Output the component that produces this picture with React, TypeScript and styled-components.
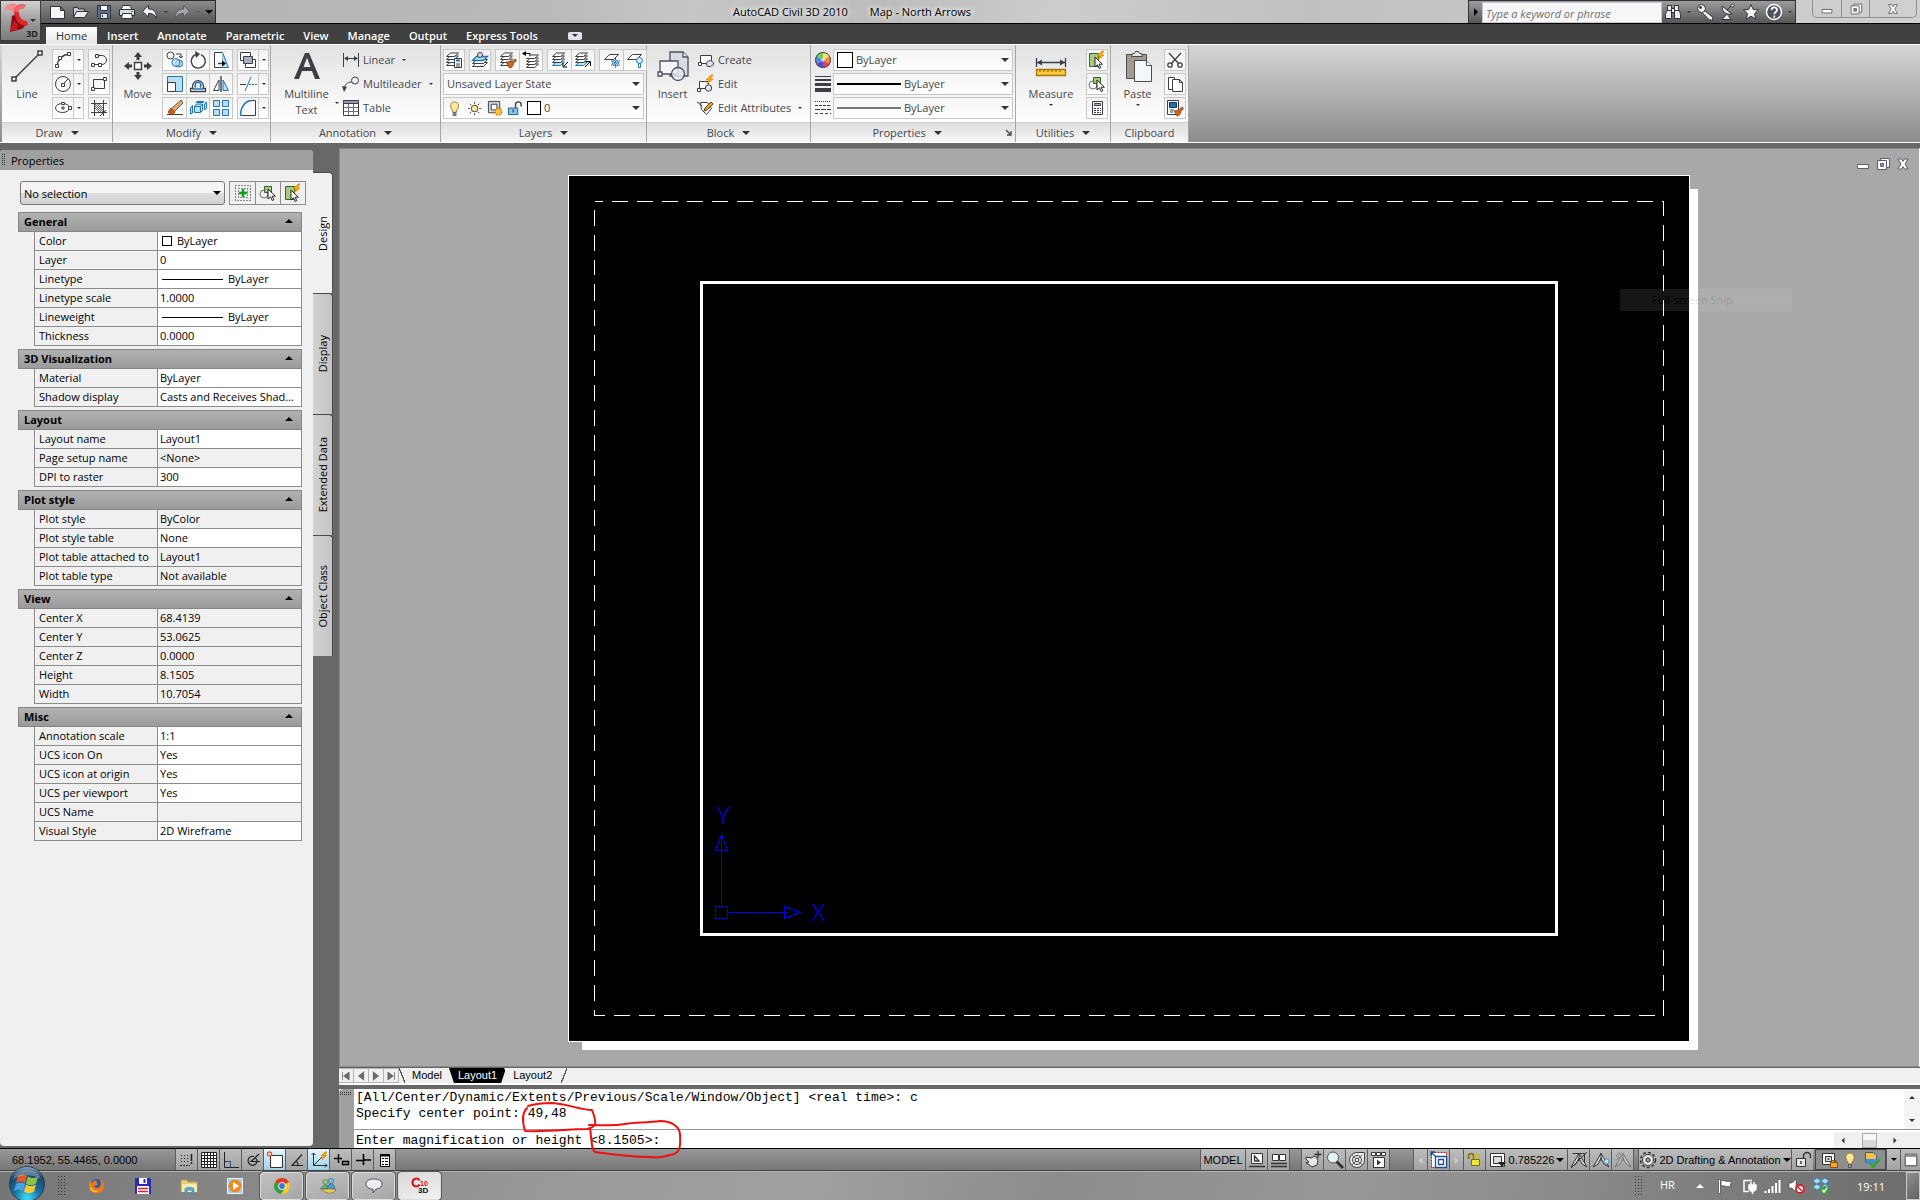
import React from "react";
import styled, { createGlobalStyle, css } from "styled-components";

const ui = `"Open Sans", "Noto Sans", sans-serif`;
const sys = `"Liberation Sans", Arial, sans-serif`;
const ink = "#3b3f45";
const blue = "#1f74b8";
const pale = "#b9dff0";

const Global = createGlobalStyle`
  * { box-sizing: border-box; }
  html, body { margin: 0; height: 100%; }
  body { background: #686868; font-family: ${ui}; font-size: 11px; color: #000; overflow: hidden; }
  button, select, input { font: inherit; color: inherit; margin: 0; padding: 0; border: 0; background: none; border-radius: 0; }
  svg { display: block; flex: none; }
  #root { height: 100%; }
`;

/* ---------- icons ---------- */

const Stack = ({ accent }: { accent?: boolean }) => (
  <g fill="#fff" stroke={ink}>
    <path d="M1.500 14.500l4-3.500h8l-4 3.500z" fill={accent ? pale : "#fff"} stroke={accent ? blue : ink} />
    <path d="M1.500 11.500l4-3.500h8l-4 3.500z" />
    <path d="M1.500 8.500l4-3.500h8l-4 3.500z" />
    <path d="M1.500 5.500l4-3.500h8l-4 3.500z" />
  </g>
);

const Cursor = () => <path d="M9 5v10l2.500-2.200 1.700 3.700 1.600-.8-1.700-3.500h3.300z" fill="#fff" stroke="#222" />;
const Bolt = () => <path d="M14 0l-5 5h3l-2 4 6-5h-3l3-4z" fill="#ffb400" stroke="#e07800" strokeWidth=".7" />;
const Viewer = () => (
  <g fill="none" stroke="#333">
    <path d="M9 2l-2 4-6 10 5-3 3-6 3 6 5 3-6-10zM9 2v8" fill="#ddd" />
  </g>
);

const icons: Record<string, React.ReactNode> = {
  new: <path d="M1.500 3.500h10l4 4v8h-14zM11.500 3.500v4h4" fill="#f4f6f8" stroke="#2d3138" />,
  open: (
    <g stroke="#2d3138" fill="#c9cfd6">
      <path d="M1.500 14.500v-10h4l1 1.500h6v3" />
      <path d="M1.500 14.500l3-6h12l-4 6z" fill="#eef1f4" />
    </g>
  ),
  save: (
    <g stroke="#2d3544">
      <path d="M2.500 2.500h13v13h-12l-1-1z" fill="#63708a" />
      <path d="M5.500 2.500h7v5h-7z" fill="#fff" />
      <path d="M5.500 10.500h7v5h-7z" fill="#dde2ea" />
      <path d="M7.500 12v2" />
    </g>
  ),
  print: (
    <g stroke="#2d3138" fill="#fff">
      <path d="M4.500 2.500h8l1 4h-10z" />
      <path d="M1.500 6.500h15v6h-15z" fill="#d8dbe0" />
      <path d="M4.500 10.500h9l1 5h-11z" />
      <path d="M13 8.500h2" stroke="#3c9a3c" />
    </g>
  ),
  undo: <path d="M7.500 2.500v3.500c5 0 8 2 8 9-2-3.500-4-4.500-8-4.500V14l-6-5.700z" fill="#f1f3f6" stroke="#2d3138" />,
  redo: <path d="M10.500 2.500v3.500c-5 0-8 2-8 9 2-3.500 4-4.500 8-4.500V14l6-5.700z" fill="#a2a6ac" stroke="#54575c" />,
  binoculars: (
    <g fill="#eceef2" stroke="#2f333a">
      <path d="M3.500 2.500h4v5h-4zM10.500 2.500h4v5h-4z" />
      <path d="M2.500 7.500h5l0 8h-6v-4zM15.500 7.500h-5v8h6v-4zM7.500 5.500h3v4h-3z" />
    </g>
  ),
  key: (
    <g fill="#eceef2" stroke="#2f333a">
      <path d="M8 7l9 7.500-.5 2.500h-3L6 9.500z" />
      <circle cx="5.500" cy="5.500" r="4" />
      <circle cx="4.500" cy="4.500" r="1" fill="#2f333a" />
    </g>
  ),
  dish: (
    <g fill="#eceef2" stroke="#2f333a">
      <path d="M3 3c0 6 4 9 10 8z" />
      <path d="M7 12l-4 4.500h9l-3-4M8 7l5-5" />
      <circle cx="13.500" cy="2.500" r="1.500" />
    </g>
  ),
  star: <path d="M9 1.500l2.200 5 5.300.5-4 3.600 1.200 5.400L9 13.200 4.300 16l1.200-5.400-4-3.600 5.300-.5z" fill="#f4f5f7" stroke="#2f333a" />,
  help: (
    <g>
      <circle cx="9" cy="9" r="7.500" fill="#4b5260" stroke="#fff" strokeWidth="1.500" />
      <path d="M6.500 7c0-3.500 5.500-3.500 5.500 0 0 2-2.700 2-2.700 4.200M9.300 12.500v2" stroke="#fff" strokeWidth="1.800" fill="none" />
    </g>
  ),
  line: (
    <g stroke={ink} strokeWidth="1.500">
      <path d="M3 29L29 3" />
      <path d="M1 27h4v4h-4zM27 1h4v4h-4z" fill="#fff" />
    </g>
  ),
  move: (
    <g fill={ink}>
      <path d="M12.500 12.500h7v7h-7z" fill="#fff" stroke={ink} strokeWidth="1.400" />
      <path d="M16 2l4 5h-2.500v3h-3v-3H12zM16 30l4-5h-2.500v-3h-3v3H12zM2 16l5-4v2.500h3v3H7V20zM30 16l-5-4v2.500h-3v3h3V20z" />
    </g>
  ),
  bigA: <path d="M3 29L14 3h4l11 26h-5l-3-8H11l-3 8zM12.500 17h7L16 7.500z" fill={ink} fillRule="evenodd" />,
  insert: (
    <g fill="#f3f5f8" stroke="#4a5060" strokeWidth="1.300">
      <path d="M13 2h13l5 5v19H13z" fill="#d8dde4" />
      <path d="M26 2v5h5" />
      <path d="M3 11h18v13H3z" />
      <path d="M1 22h4v4H1z" />
      <circle cx="21" cy="24" r="6.500" fill="#e9edf2" fillOpacity=".8" />
    </g>
  ),
  measure: (
    <g stroke={ink} strokeWidth="1.300">
      <path d="M1.500 8v9M30.500 8v9M2 12.500h28" />
      <path d="M2 12.500l5-3v6zM30 12.500l-5-3v6z" fill={ink} stroke="none" />
      <path d="M1.500 19.500h29v6h-29z" fill="#f9c93a" stroke="#a87410" />
      <path d="M5 20v2M9 20v2M13 20v2M17 20v2M21 20v2M25 20v2" stroke="#a87410" />
    </g>
  ),
  paste: (
    <g stroke="#4e4a48">
      <path d="M4.500 4.500h20v24h-20z" fill="#a39a92" />
      <path d="M9.500 6.500l1-3h2l1-2h3l1 2h2l1 3z" fill="#e6e6e6" />
      <path d="M12.500 10.500h12l5 5v16h-17z" fill="#f3f6fb" />
      <path d="M24.500 10.500v5h5" fill="#fff" />
    </g>
  ),
  arc: (
    <g stroke={ink} fill="#fff">
      <path d="M3 15c1-7 5-11 12-12" fill="none" strokeWidth="1.300" />
      <path d="M1.500 13.500h3v3h-3zM4.500 5.500h3v3h-3zM13.500 1.500h3v3h-3z" />
    </g>
  ),
  circle: (
    <g stroke={ink} fill="none">
      <circle cx="9" cy="9" r="7.500" />
      <path d="M9 9l5-5" />
      <path d="M7.500 8.500h3v3h-3z" fill="#fff" />
    </g>
  ),
  ellipse: (
    <g stroke={ink} fill="#fff">
      <ellipse cx="8.500" cy="9" rx="7" ry="4.500" />
      <path d="M14.500 7.500h3v3h-3zM7.500 3.500h3v2h-3z" />
      <path d="M7 9h4M9 7v4" />
    </g>
  ),
  pline: (
    <g stroke={ink} fill="none">
      <path d="M7 4.500h5a4.500 4.500 0 010 9H4" />
      <path d="M5.500 3.500h3v3h-3zM1.500 12.500h3v3h-3zM8.500 12.500h3v3h-3z" fill="#fff" />
    </g>
  ),
  rect: (
    <g stroke={ink} fill="none">
      <path d="M3.500 4.500h11v9h-11z" />
      <path d="M13.500 2.500h3v3h-3zM1.500 12.500h3v3h-3z" fill="#fff" />
    </g>
  ),
  hatch: (
    <g stroke={ink} fill="none">
      <path d="M4.500 1v16M13.500 1v16M1 4.500h16M1 13.500h16" />
      <path d="M5 5l8 8M5 9l4 4M9 5l4 4M5 7l6 6M7 5l6 6" strokeWidth=".8" />
      <path d="M10 17l6-6" />
    </g>
  ),
  copy: (
    <g fill="#fff" stroke={ink}>
      <circle cx="4.500" cy="4.500" r="3.500" />
      <path d="M10 3h5v4M13 5l2 2 2-2" fill="none" />
      <circle cx="13" cy="12.500" r="3.500" stroke={blue} fill={pale} />
      <circle cx="10" cy="11.500" r="4" stroke={blue} fill={pale} fillOpacity=".6" />
    </g>
  ),
  rotate: (
    <g fill="none" stroke={ink}>
      <path d="M7 3.500a7 7 0 105 .2" strokeWidth="1.400" />
      <path d="M6 0l5 3-4 4z" fill={ink} stroke="none" />
    </g>
  ),
  stretch: (
    <g stroke={ink} fill="none">
      <path d="M10.500 1.500l6 15h-6z" fill={pale} stroke={blue} />
      <path d="M10.500 1.500h-8v15h8" fill="#fff" />
      <path d="M6 12.500h5" strokeWidth="1.500" />
      <path d="M10 9.500l4 3-4 3z" fill="#000" stroke="none" />
    </g>
  ),
  scale: (
    <g>
      <path d="M1.500 1.500h15v15h-15z" fill={pale} stroke={blue} />
      <path d="M1.500 7.500h8v9h-8z" fill="#fff" stroke={ink} />
    </g>
  ),
  offset: (
    <g fill="none">
      <path d="M1.500 16.500h15v-3H14a5.500 5.500 0 10-10 0H1.500z" stroke={ink} strokeWidth="1.300" />
      <path d="M7 12.500a3 3 0 114 0M4 14h10" stroke={blue} strokeWidth="1.600" />
    </g>
  ),
  mirror: (
    <g>
      <path d="M7 5v10.500H1.500z" fill="#fff" stroke={ink} />
      <path d="M11 5v10.500h5.500z" fill={pale} stroke={blue} />
      <path d="M9 1v16" stroke={ink} strokeWidth="1.400" />
    </g>
  ),
  erase: (
    <g>
      <path d="M1 15.500h16" stroke={ink} />
      <path d="M15 1l2 3-9 9-3-3z" fill="#d8b070" stroke="#4a3a20" strokeWidth=".8" />
      <path d="M5 9l4 4-2 2.500H4L2 13z" fill="#d65a1c" stroke="#8a3208" strokeWidth=".8" />
    </g>
  ),
  explode: (
    <g fill={pale} stroke={blue}>
      <path d="M5.500 7.500h6v6h-6zM5.500 7.500l2-2.500h6l-2 2.500M11.500 13.500l2-2V5" />
      <path d="M3.500 6.500l-2 2.500v6l2-1zM15.500 5l2-2v6l-2 2zM8 2.500h7l-1 1H7z" />
    </g>
  ),
  array: <path d="M1.500 1.500h6v6h-6zM10.500 1.500h6v6h-6zM1.500 10.500h6v6h-6zM10.500 10.500h6v6h-6z" fill={pale} stroke={blue} />,
  order: (
    <g stroke={ink}>
      <path d="M1.500 1.500h10v8h-10zM6.500 8.500h10v8h-10z" fill="#fff" />
      <path d="M4.500 5.500h9v7h-9z" fill="#aab0bb" />
    </g>
  ),
  trim: (
    <g fill="none">
      <path d="M1 9.500h6" stroke={ink} />
      <path d="M12 2L6 16" stroke={blue} />
      <path d="M10 9.500h8" stroke={blue} strokeDasharray="2 1" />
    </g>
  ),
  fillet: (
    <g fill="none">
      <path d="M1.500 16.500h15v-15h-4" stroke={ink} />
      <path d="M1.500 16.500C1.500 7 7 1.500 13 1.500" stroke={blue} strokeWidth="1.500" />
    </g>
  ),
  linear: (
    <g stroke={ink}>
      <path d="M1.500 2v14M16.500 2v14M3 7.500h12" />
      <path d="M2 7.500l4-2.500v5zM16 7.500l-4-2.500v5z" fill={ink} stroke="none" />
    </g>
  ),
  leader: (
    <g stroke={ink} fill="none">
      <path d="M2 15c1-6 3-8 8-8" />
      <path d="M0 11l2 6 3-5z" fill={ink} stroke="none" />
      <circle cx="13" cy="5.500" r="3.500" />
    </g>
  ),
  table: (
    <g stroke={ink} fill="#fff">
      <path d="M1.500 1.500h15v15h-15z" />
      <path d="M1.500 1.500h15v3h-15z" fill="#8e99ab" />
      <path d="M2 8.500h14M2 12.500h14M6.500 5v11M11.500 5v11" stroke="#66707e" />
    </g>
  ),
  layerProps: (
    <g>
      <Stack />
      <path d="M9.500 7.500h7v9h-7z" fill="#fff" stroke={ink} />
      <path d="M11 9.500h4" stroke={blue} strokeWidth="2" />
      <path d="M11 13h4M11 15h4" stroke={ink} />
    </g>
  ),
  layerCurrent: (
    <g>
      <g fill="#fff" stroke={ink}>
        <path d="M1.500 15.500l4-4h11l-4 4z" />
        <path d="M1.500 12.500l4-4h11l-4 4z" />
      </g>
      <path d="M1.500 9.500l4-4h11l-4 4z" fill={pale} stroke={blue} strokeWidth="1.300" />
      <circle cx="9" cy="4" r="2.500" fill="#d7dbe0" stroke={ink} />
    </g>
  ),
  layerMatch: (
    <g>
      <Stack />
      <path d="M7 11c2 0 3-1 5 0l4-3 1.500 2-3 2c0 3-2 5-4 5z" fill="#c96a1e" stroke="#7a3a08" strokeWidth=".7" />
    </g>
  ),
  layerPrev: (
    <g>
      <g transform="translate(3 2)"><Stack /></g>
      <path d="M1 0h6v7H1z" fill="#f6f6f6" />
      <path d="M8 4.500V2.500H3" stroke="#000" fill="none" />
      <path d="M0 2.500L4 0v5z" fill="#000" />
    </g>
  ),
  layerIso: (
    <g>
      <Stack accent />
      <path d="M17 11l-4 4M12 12v4h4" stroke="#000" fill="none" />
    </g>
  ),
  layerUniso: (
    <g>
      <Stack accent />
      <path d="M11 16l5-5M12 10.500h4.500V15" stroke="#000" fill="none" />
    </g>
  ),
  layerFreeze: (
    <g>
      <path d="M1.500 8.500l5-5h9l-5 5z" fill="#fff" stroke={ink} />
      <circle cx="12.500" cy="12" r="3" fill="#fff" stroke={blue} />
      <path d="M12.500 7v10M8 9.500l9 5M8 14.500l9-5" stroke={blue} strokeDasharray="2 1" />
    </g>
  ),
  layerOff: (
    <g>
      <path d="M1.500 8.500l5-5h9l-5 5z" fill="#fff" stroke={ink} />
      <circle cx="13.500" cy="9.500" r="3" fill="#d6effb" stroke={blue} />
      <path d="M12.500 12.500h2v4h-2z" fill="#fff" stroke={blue} />
    </g>
  ),
  bulb: (
    <g>
      <path d="M6 11C2 7 4 2 8 2s6 5 2 9v2H6z" fill="#ffe79a" stroke="#8a7a40" />
      <path d="M6.500 13.500h3v3h-3z" fill="#9aa0a8" stroke="#555" />
    </g>
  ),
  sun: (
    <g stroke={ink}>
      <circle cx="8" cy="9" r="3.500" fill="#ffe79a" />
      <path d="M8 2v2M8 14v2M1 9h2M13 9h2M3 4l1.500 1.500M11.500 12.500L13 14M3 14l1.500-1.500M11.500 5.500L13 4" />
    </g>
  ),
  vpSun: (
    <g>
      <path d="M1.500 1.500h12v12h-12z" fill="#cfd4da" stroke={ink} />
      <path d="M4.500 4.500h6v6h-6z" fill="#fff" stroke={ink} />
      <circle cx="12" cy="12.500" r="3.500" fill="#ffc93a" stroke="#e07a10" strokeDasharray="2 1" strokeWidth="1.500" />
    </g>
  ),
  unlock: (
    <g fill="none">
      <path d="M9 8.500V5a3 3 0 016 0v2" stroke={ink} strokeWidth="1.500" />
      <path d="M1.500 8.500h10v7h-10z" fill="#7cc8e4" stroke="#245a78" />
      <path d="M6.500 10v3" stroke="#123" />
    </g>
  ),
  create: (
    <g fill="#fff" stroke={ink}>
      <path d="M3.500 4.500h11v8h-11z" />
      <path d="M1.500 11.500h3v3h-3z" />
      <path d="M10.500 15.500a3.500 3.500 0 116-2l-3 2z" fill="#dfe4ea" />
    </g>
  ),
  blockEdit: (
    <g fill="#fff" stroke={ink}>
      <path d="M2.500 6.500h9v7h-9z" />
      <path d="M.500 13.500h3v3h-3z" />
      <circle cx="11.500" cy="13" r="3.200" fill="#dfe4ea" />
      <Bolt />
    </g>
  ),
  editAttr: (
    <g fill="#fff" stroke={ink}>
      <path d="M3.500 3.500h7l4 6-5 6-5-5z" />
      <path d="M0 3l5 4" />
      <path d="M14 3l2 2-6 6-3 1 1-3z" fill="#f0a030" stroke="#5a3a10" />
    </g>
  ),
  wheel: (
    <g>
      <path d="M9 9V1a8 8 0 016.900 4z" fill="#f4e36a" />
      <path d="M9 9l6.900-4a8 8 0 010 8z" fill="#f08a3c" />
      <path d="M9 9l6.900 4A8 8 0 019 17z" fill="#e0405a" />
      <path d="M9 9v8a8 8 0 01-6.900-4z" fill="#5a4ad0" />
      <path d="M9 9l-6.900 4a8 8 0 010-8z" fill="#4a8ae0" />
      <path d="M9 9L2.100 5A8 8 0 019 1z" fill="#7ac860" />
      <circle cx="9" cy="9" r="7.500" fill="none" stroke="#4a4a55" />
      <circle cx="9" cy="9" r="2" fill="#fff" fillOpacity=".5" />
    </g>
  ),
  weights: <path d="M1 1h16v1H1zM1 4h16v2H1zM1 8h16v3H1zM1 13h16v4H1z" fill={ink} />,
  types: (
    <g stroke={ink} fill="none">
      <path d="M1 2.500h16" strokeDasharray="1 1" />
      <path d="M1 6.500h16" strokeDasharray="3 1" />
      <path d="M1 10.500h16" strokeDasharray="5 1" />
      <path d="M1 14.500h16" strokeDasharray="3 2" />
    </g>
  ),
  quickSel: (
    <g>
      <path d="M1.500 2.500h9v13h-9z" fill="#a8c884" stroke="#2f6a2a" />
      <Bolt />
      <g transform="translate(-2 1)"><Cursor /></g>
    </g>
  ),
  selObj: (
    <g>
      <circle cx="5" cy="10" r="4" fill="none" stroke="#6a6f76" />
      <path d="M5.500 2.500h7v6h-7z" fill="#a8c884" stroke="#2f6a2a" />
      <Cursor />
    </g>
  ),
  pickAdd: (
    <g>
      <path d="M1.500 1.500h15v15h-15zM4.500 4.500h9v9h-9z" fill="none" stroke="#222" strokeDasharray="1 2" />
      <path d="M9 5v8M5 9h8" stroke="#14a01e" strokeWidth="2.600" />
    </g>
  ),
  calc: (
    <g stroke={ink}>
      <path d="M4.500 2.500h10v13h-10z" fill="#fff" />
      <path d="M6.500 4.500h6v2h-6z" fill="#aeb6c0" />
      <path d="M6 9.500h7M6 11.500h7M6 13.500h7" strokeDasharray="2 1" />
    </g>
  ),
  cut: (
    <g stroke={ink} fill="none" strokeWidth="1.300">
      <path d="M3 2l10 11M15 2L5 13" />
      <circle cx="4" cy="14" r="2.200" />
      <circle cx="14" cy="14" r="2.200" />
    </g>
  ),
  copyClip: (
    <g stroke={ink} fill="#fff">
      <path d="M2.500 2.500h6v12h-6z" />
      <path d="M6.500 4.500h7l3 3v9h-10zM13.500 4.500v3h3" />
    </g>
  ),
  matchProp: (
    <g>
      <path d="M1.500 1.500h11v14h-11z" fill="#fff" stroke={ink} />
      <path d="M3.500 3.500h7v5h-7z" fill="#2f6aa8" stroke="#123a68" />
      <path d="M4 11h4M4 13h3" stroke={ink} />
      <path d="M8 12c2 0 3-1 5-1l3-3 1.500 2-2.500 2c0 3-2 5-4 5z" fill="#c96a1e" stroke="#7a3a08" strokeWidth=".7" />
    </g>
  ),
  first: <path d="M4.500 4v10M13 4v10L6 9z" stroke="#6a6a6a" fill="#6a6a6a" />,
  prev: <path d="M13 3v12L5 9z" fill="#6a6a6a" />,
  next: <path d="M5 3v12l8-6z" fill="#6a6a6a" />,
  last: <path d="M13.500 4v10M5 4v10l7-5z" stroke="#6a6a6a" fill="#6a6a6a" />,
  snap: (
    <g stroke="#222">
      <path d="M3 4.500h8M3 7.500h8M3 10.500h8" strokeDasharray="1 2" />
      <path d="M2 14.500h10" strokeDasharray="2 1" />
      <path d="M13.500 3v12" strokeDasharray="7 1 2 9" strokeWidth="1.500" />
    </g>
  ),
  grid: (
    <g stroke="#222" fill="#fff">
      <path d="M1.500 1.500h15v15h-15z" />
      <path d="M4.500 1v16M7.500 1v16M10.500 1v16M13.500 1v16M1 4.500h16M1 7.500h16M1 10.500h16M1 13.500h16" />
    </g>
  ),
  ortho: (
    <g fill="none">
      <path d="M2.500 1v15.500H17" stroke="#222" />
      <path d="M3 10.500h5.500v6" stroke="#2a4a78" />
    </g>
  ),
  polar: (
    <g stroke="#222" fill="none" strokeWidth="1.200">
      <path d="M10 5.500a4.500 4.500 0 103 5" />
      <path d="M15 3l-8 7.500h9M11 6l3 5" />
    </g>
  ),
  osnap: (
    <g>
      <path d="M4.500 4.500h12v12h-12z" fill="#fff" stroke="#333" />
      <circle cx="3.500" cy="3" r="2" fill="#fff" stroke="#e0562a" strokeWidth="1.400" />
    </g>
  ),
  otrack: <path d="M14 3.500L4 14.500h11M8 10c2 1 2 3 2 4" stroke="#222" fill="none" strokeWidth="1.200" />,
  ducs: (
    <g stroke="#234" fill="none">
      <path d="M3.500 2v12.500H17M3.500 14.500L12 6M1.500 4l2-2 2 2M15 12.500l2 2-2 2" />
      <path d="M15 1l-4 4h3l-2 4 5-5h-3l3-3z" fill="#ffb400" stroke="#e07800" strokeWidth=".7" />
    </g>
  ),
  dyn: <path d="M2 7.500h8M6.500 3v9M10.500 10.500h6v3h-6z" stroke="#000" strokeWidth="1.400" fill="none" />,
  lwt: <path d="M2 9.500h7M10 9h7M9.500 3v11" stroke="#000" strokeWidth="1.600" fill="none" />,
  qp: (
    <g stroke="#000" fill="#fff">
      <path d="M4.500 3.500h9v12h-9z" />
      <path d="M4 4.500h10" strokeWidth="2" />
      <path d="M6 7.500h2M9 7.500h3M6 10.500h2M9 10.500h3M6 13.500h2M9 13.500h3" />
    </g>
  ),
  modelSheet: (
    <g>
      <path d="M3.500 2.500h11v10h-11z" fill="#fff" stroke="#333" />
      <path d="M6.500 5v5H11zM1 15.500h16" stroke="#333" fill="none" strokeWidth="1.300" />
    </g>
  ),
  sheets: (
    <g fill="#fff" stroke="#333">
      <path d="M2.500 3.500h6v6h-6zM9.500 3.500h6v6h-6z" />
      <path d="M1 12.500h16M1 15.500h16" strokeWidth="1.400" />
    </g>
  ),
  pan: (
    <g stroke="#333">
      <path d="M2 6l5 1 4-2 3 4-1 5-5 2-4-3-2-1 3-1-3-3z" fill="#e6e8ec" />
      <path d="M14 0v7M10.500 3.500h7" strokeWidth="1.300" />
    </g>
  ),
  zoom: (
    <g>
      <path d="M10 10l7 7" stroke="#333" strokeWidth="3" />
      <circle cx="7" cy="6.500" r="5.500" fill="#e4f4f8" stroke="#555" />
    </g>
  ),
  steering: (
    <g fill="#e8e8e8" stroke="#444">
      <path d="M9 1.500h7.500V9a7.500 7.500 0 11-7.500-7.500z" />
      <circle cx="9" cy="9" r="4.500" fill="none" />
      <path d="M4 4l10 10M14 4L4 14" strokeWidth=".8" />
      <circle cx="9" cy="9" r="1.800" fill="#fff" />
    </g>
  ),
  motion: (
    <g fill="#fff" stroke="#333">
      <path d="M1.500 1.500h4v3h-4zM6.500 1.500h4v3h-4zM11.500 1.500h4v3h-4zM3.500 6.500h11v10h-11z" />
      <path d="M7 8.500v6l4-3z" fill="#333" stroke="none" />
    </g>
  ),
  trayPrev: <path d="M11 5v9L6 9.500z" fill="#d0d0d0" />,
  trayNext: <path d="M6 5v9l5-4.500z" fill="#d0d0d0" />,
  maxVp: (
    <g fill="none">
      <path d="M1.500 1.500h15v15h-15z" stroke="#c8102a" strokeDasharray="2 1" fill="#fff" />
      <path d="M5.500 5.500h11v11h-11zM8.500 8.500h5v5h-5zM1 5V1h4M1 1l5 5" stroke="#1c4f8c" strokeWidth="1.300" />
    </g>
  ),
  vpLock: (
    <g stroke="#7a7200">
      <path d="M2.500 8V5a2.500 2.500 0 015 0v3" fill="none" strokeWidth="1.500" />
      <path d="M5.500 8.500h8v6h-8z" fill="#f2e63a" />
      <path d="M8.500 8V6a2.500 2.500 0 015 0v2" fill="none" stroke="#c8bc10" strokeWidth="1.500" />
    </g>
  ),
  vpScale: (
    <g>
      <path d="M1.500 2.500h14v13h-14z" fill="#fff" stroke="#333" />
      <path d="M4.500 5.500h8v7h-8z" fill="#d8dce2" stroke="#333" />
      <path d="M9 11h8l-4 5z" fill="#222" />
    </g>
  ),
  annoSync: (
    <g fill="none" stroke="#333">
      <path d="M2.500 2.500h12v12" />
      <Viewer />
      <path d="M1 17L17 1" />
    </g>
  ),
  annoVis: (
    <g>
      <Viewer />
      <circle cx="14.500" cy="10.500" r="2.500" fill="#bfe2f4" stroke="#4a90b8" />
    </g>
  ),
  annoAuto: (
    <g opacity=".45">
      <Viewer />
      <path d="M6 1L2 5h3l-2 4 5-5H5z" fill="#fff" stroke="#555" />
    </g>
  ),
  gear: (
    <g fill="none" stroke="#333">
      <circle cx="9" cy="9" r="7.500" strokeDasharray="3 2" strokeWidth="1.500" />
      <circle cx="9" cy="9" r="5.500" fill="#eee" />
      <circle cx="9" cy="9" r="2.200" fill="#999" />
    </g>
  ),
  padlock: (
    <g fill="none" stroke="#333">
      <path d="M9.500 8V5a3.500 3.500 0 017 0v2" strokeWidth="1.400" />
      <path d="M2.500 7.500h9v8h-9z" fill="#e8e8e8" />
      <path d="M7 10v3" strokeWidth="1.400" />
    </g>
  ),
  hwLock: (
    <g>
      <path d="M1.500 2.500h12v11h-12z" fill="#fff" stroke="#333" />
      <path d="M4.500 5.500h6v5h-6z" fill="#ddd" stroke="#333" />
      <circle cx="7.500" cy="8" r="1" fill="#333" />
      <path d="M9.500 11.500h7v5h-7z" fill="#f5a623" stroke="#8a5208" />
      <path d="M11 11V9.500h4V11" fill="none" stroke="#8a5208" />
    </g>
  ),
  trayCheck: (
    <g>
      <path d="M2.500 1.500h8l3 3v7h-11z" fill="#f5c24a" stroke="#3a5a88" />
      <path d="M3 8h11v5H3z" fill="#4a8ad0" />
      <path d="M7 12l3 4 7-8" stroke="#35a82a" strokeWidth="2.400" fill="none" />
    </g>
  ),
  clean: (
    <g>
      <path d="M2.500 2.500h13v13h-13z" fill="#fff" stroke="#333" />
      <path d="M3 4h12" stroke="#8a8a8a" strokeWidth="3" />
    </g>
  ),
  firefox: (
    <g>
      <circle cx="9" cy="9" r="7" fill="#2a5cb0" />
      <path d="M2 3c0 2 1 3 2 3 1-2 3-3 5-2-1 1-1 2 1 3-1 2-4 1-4 2 1 3 7 3 7-3 0-2-1-3-2-4 5 1 6 6 5 9a7.800 7.800 0 01-15-1c-.5-3 0-5 1-7z" fill="#ea7a16" />
      <path d="M3 6c-2 5 3 9 8 7-3 4-9 2-9-3z" fill="#f8b934" />
    </g>
  ),
  floppy: (
    <g>
      <path d="M1 1h15l1 1v15H1z" fill="#2a2ac0" />
      <path d="M5 1h8v6H5z" fill="#fff" />
      <path d="M9.500 2h2v4h-2z" fill="#2a2ac0" />
      <path d="M3 9h12v8H3z" fill="#fff" />
      <path d="M4 11.500h10M4 14.500h10" stroke="#d8203a" strokeWidth="1.300" />
    </g>
  ),
  folder: (
    <g>
      <path d="M1 3h6l1 2h9v10H1z" fill="#e8cf78" stroke="#b89a40" strokeWidth=".7" />
      <path d="M2 7h15v8H2z" fill="#f8eab0" />
      <path d="M5 17v-5c0-2 9-2 9 0v5h-2v-4H7v4z" fill="#58b0e0" stroke="#3a80b0" strokeWidth=".7" />
    </g>
  ),
  wmp: (
    <g>
      <path d="M1.500 1.500h15v15h-15z" fill="#9fd0f2" stroke="#e8f4fc" />
      <circle cx="9" cy="9" r="6.500" fill="#f08a1c" />
      <path d="M7 5v8l6-4z" fill="#fff" />
    </g>
  ),
  chrome: (
    <g>
      <circle cx="9" cy="9" r="8" fill="#f6c82c" />
      <path d="M9 9L2.100 5A8 8 0 0116 5z" fill="#dd3a2c" />
      <path d="M9 9L2.100 5A8 8 0 008 17l4-6z" fill="#2f9e48" />
      <circle cx="9" cy="9" r="3.800" fill="#fff" />
      <circle cx="9" cy="9" r="2.900" fill="#3a78d8" />
    </g>
  ),
  people: (
    <g stroke="#33556a" strokeWidth=".5">
      <circle cx="6.500" cy="5" r="2.500" fill="#8cd070" />
      <circle cx="12" cy="4" r="2.700" fill="#7ab8e4" />
      <path d="M3 12c0-5 7-5 7 0z" fill="#62b84a" />
      <path d="M8 12c0-7 8-7 8 0z" fill="#4a94d0" />
      <path d="M1 11c5 3 9-1 16 2-4 5-11 4-16-2z" fill="#f2c64a" />
    </g>
  ),
  chat: <path d="M9 2c5 0 8 2 8 5s-3 5-6 5l-3 4v-4c-4 0-7-2-7-5s3-5 8-5z" fill="#eceff2" stroke="#555" />,
  c10: (
    <g fontFamily={sys} fontWeight="bold">
      <path d="M8.500 3.500C7 .5 1.500 1 1.500 5.500S7 10.500 8.500 7.500" fill="none" stroke="#d01424" strokeWidth="2" />
      <text x="9" y="9" fontSize="7" fill="#d01424">10</text>
      <text x="7" y="16" fontSize="8" fill="#111">3D</text>
    </g>
  ),
  flag: (
    <g fill="#fff" stroke="#444" strokeWidth=".7">
      <path d="M2.500 2.500h2v14h-2z" />
      <path d="M5 4c3-2 4 2 11 0l-2 4 2 1c-5 2-7-1-11 0z" />
    </g>
  ),
  plug: (
    <g fill="none" stroke="#fff" strokeWidth="1.500">
      <path d="M12 3.500H4v11h5" />
      <path d="M9 8h7v4l-2 2h-3l-2-2zM11 5v3M14 5v3M12.500 14v3" fill="#fff" />
    </g>
  ),
  signal: <path d="M1.500 14v2M5 12v4M8.500 9v7M12 6v10M15.500 3v13" stroke="#fff" strokeWidth="2" />,
  mute: (
    <g>
      <path d="M1 6h3l4-4v13l-4-4H1z" fill="#fff" stroke="#444" strokeWidth=".6" />
      <circle cx="12" cy="12" r="4" fill="#fff" stroke="#d8202a" strokeWidth="1.800" />
      <path d="M9.500 9.500l5 5" stroke="#d8202a" strokeWidth="1.600" />
    </g>
  ),
  dropbox: (
    <g>
      <path d="M5 1l4 3-4 3-4-3zM13 1l4 3-4 3-4-3zM5 7l4 3-4 3-4-3zM13 7l4 3-4 3-4-3z" fill="#a8dcf8" stroke="#2a86c8" strokeWidth=".8" />
      <circle cx="12.500" cy="13" r="4" fill="#38a83a" />
      <path d="M10.500 13l1.500 2 3-4" stroke="#fff" strokeWidth="1.400" fill="none" />
    </g>
  ),
  min: <path d="M3.500 9.500h11v4h-11z" fill="#fff" stroke="#5a5f70" />,
  restore: (
    <g fill="#fff" stroke="#5a5f70">
      <path d="M6.500 3.500h9v9h-9z" />
      <path d="M3.500 5.500h9v9h-9z" />
      <path d="M6.500 8.500h3v3h-3z" fill="#999" />
    </g>
  ),
  close: <path d="M4 4h3.500L9 6.500 10.500 4H14l-3 5 3 5h-3.500L9 11.500 7.500 14H4l3-5z" fill="#fff" stroke="#5a5f70" />,
};

const large = ["line", "move", "bigA", "insert", "measure", "paste"];

const Icon = ({ name, size = 18 }: { name: string; size?: number }) => (
  <svg width={size} height={size} viewBox={large.includes(name) ? "0 0 32 32" : "0 0 18 18"} overflow="visible" aria-hidden="true">
    {icons[name]}
  </svg>
);

const Caret = styled.span<{ $w?: number; $color?: string; $up?: boolean }>`
  flex: none;
  width: 0;
  height: 0;
  border: ${(p) => p.$w ?? 4}px solid transparent;
  border-bottom-width: 0;
  border-top-color: ${(p) => p.$color ?? "#333"};
  ${(p) => p.$up && css`transform: scaleY(-1);`}
`;

/* ---------- frame ---------- */

const Shell = styled.div`
  display: flex;
  flex-direction: column;
  height: 100vh;
  min-width: 1280px;
`;

const TitleBar = styled.header`
  position: relative;
  display: flex;
  height: 24px;
  flex: none;
  background: linear-gradient(100deg, #b4b4b4 0%, #b9b9b9 28%, #c6c6c6 36%, #bcbcbc 46%, #cdcdcd 55%, #c0c0c0 68%, #d0d0d0 100%);
  border-bottom: 1px solid #000;
`;

const LogoButton = styled.button`
  position: absolute;
  left: 0;
  top: 0;
  width: 41px;
  height: 41px;
  z-index: 2;
  border: 1px solid #3a3a3a;
  background: linear-gradient(#d2d2d2, #9a9a9a 55%, #7c7c7c);
  svg { position: absolute; left: 2px; top: 2px; }
  span { position: absolute; }
  ${Caret} { right: 4px; top: 18px; }
`;

const LogoTag = styled.span`
  right: 2px;
  bottom: 0;
  font-size: 9px;
  font-weight: 700;
  line-height: 12px;
  color: #222;
`;

const QuickBar = styled.div`
  display: flex;
  align-items: center;
  gap: 5px;
  width: 216px;
  padding: 0 3px 0 48px;
  background: linear-gradient(#8b8b8b, #565656);
  border: 1px solid #2c2c2c;
  border-bottom: 0;
  button { display: flex; }
`;

const WindowTitle = styled.h1`
  flex: 1;
  display: flex;
  justify-content: center;
  gap: 22px;
  margin: 0;
  padding-left: 20px;
  font-size: 11px;
  font-weight: 400;
  line-height: 24px;
  white-space: pre;
  text-shadow: 0 0 6px #fff, 0 0 6px #fff;
`;

const InfoCenter = styled.form`
  display: flex;
  align-items: center;
  gap: 5px;
  width: 328px;
  padding-right: 4px;
  background: linear-gradient(#9c9c9c, #565656);
  border: 1px solid #333;
  border-bottom: 0;
  button { display: flex; }
`;

const InfoArrow = styled.button`
  justify-content: center;
  width: 13px;
  span { transform: rotate(-90deg); }
`;

const Keyword = styled.input`
  width: 180px;
  height: 21px;
  margin-right: -3px;
  padding: 2px 3px 0;
  background: #f7f7f7;
  border: 1px solid #c9c3d4;
  &::placeholder { font-style: italic; color: #707070; opacity: 1; }
`;

const WinControls = styled.div`
  display: flex;
  height: 18px;
  margin: 0 3px 0 16px;
  border: 1px solid #8f8f8f;
  border-top: 0;
  border-radius: 0 0 5px 5px;
`;

const WinButton = styled.button<{ $wide?: boolean }>`
  display: flex;
  justify-content: center;
  align-items: center;
  width: ${(p) => (p.$wide ? 47 : 28)}px;
  & + & { border-left: 1px solid #8f8f8f; }
`;

const MenuBar = styled.nav`
  display: flex;
  align-items: flex-end;
  height: 20px;
  flex: none;
  padding-left: 46px;
  background: #404040;
`;

const MenuTab = styled.button<{ $on?: boolean }>`
  display: flex;
  align-items: center;
  height: 17px;
  padding: 0 ${(p) => (p.$on ? 10 : 9)}px 0 10px;
  font-weight: ${(p) => (p.$on ? 400 : 600)};
  line-height: 17px;
  color: ${(p) => (p.$on ? "#333" : "#fff")};
  background: ${(p) => (p.$on ? "linear-gradient(#fff, #e6e6e6)" : "none")};
`;

const RibbonToggle = styled.span`
  display: flex;
  align-items: center;
  justify-content: center;
  width: 14px;
  height: 8px;
  margin-left: 11px;
  border-radius: 2px;
  background: #dfe3ea;
`;

/* ---------- ribbon ---------- */

const Ribbon = styled.section`
  display: flex;
  flex: none;
  height: 99px;
  padding-left: 2px;
  background: linear-gradient(#d6d6d6, #8c8c8c);
  border-top: 1px solid #fff;
  border-bottom: 1px solid #fff;
  color: #45484d;
`;

const Panel = styled.section<{ $w: number }>`
  display: flex;
  flex-direction: column;
  width: ${(p) => p.$w}px;
  border-right: 1px solid #a6a6a6;
  background: linear-gradient(#e2e2e2, #fff 80%);
`;

const PanelBody = styled.div<{ $pad?: number }>`
  display: flex;
  flex: 1;
  gap: 4px;
  padding: 4px 2px 3px ${(p) => p.$pad ?? 0}px;
`;

const PanelTitle = styled.button<{ $launcher?: boolean }>`
  position: relative;
  display: flex;
  align-items: center;
  justify-content: center;
  gap: 8px;
  height: 20px;
  padding-right: ${(p) => (p.$launcher ? 12 : 0)}px;
  line-height: 20px;
  border-top: 1px solid #d0d0d0;
  background: linear-gradient(#dedede, #f6f6f6);
  svg { position: absolute; right: 3px; }
`;

const BigButton = styled.button<{ $w: number }>`
  position: relative;
  display: flex;
  flex-direction: column;
  align-items: center;
  flex: none;
  width: ${(p) => p.$w}px;
  margin-right: -4px;
  line-height: 16px;
  svg { margin: 1px 0 4px; }
  ${Caret} { margin-top: 2px; }
`;

const SideCaret = styled.span`
  position: absolute;
  right: 3px;
  top: 55px;
`;

const Col = styled.div<{ $grow?: boolean }>`
  display: flex;
  flex-direction: column;
  gap: 2px;
  ${(p) => p.$grow && css`flex: 1; min-width: 0;`}
`;

const Row = styled.div<{ $gap?: number }>`
  display: flex;
  align-items: center;
  gap: ${(p) => p.$gap ?? 0}px;
`;

const ToolGroup = styled.div`
  display: flex;
  height: 22px;
  border: 1px solid #c8c8c8;
  background: linear-gradient(#f2f2f2, #fff);
  button + button { border-left: 1px solid #c8c8c8; }
`;

const Tool = styled.button<{ $w?: number }>`
  display: flex;
  align-items: center;
  justify-content: center;
  width: ${(p) => p.$w ?? 20}px;
`;

const Label = styled.button`
  display: flex;
  align-items: center;
  gap: 3px;
  height: 22px;
  line-height: 20px;
  white-space: nowrap;
  ${Caret} { margin-left: 4px; }
`;

const Combo = styled.label`
  position: relative;
  display: flex;
  align-items: center;
  gap: 3px;
  width: 100%;
  height: 22px;
  padding: 0 16px 0 3px;
  border: 1px solid #c8c8c8;
  background: linear-gradient(#f4f4f4, #fff);
  select { flex: 1; min-width: 0; appearance: none; outline: 0; line-height: 18px; }
  > span:last-child { position: absolute; right: 3px; }
`;

const Swatch = styled.span<{ $s: number }>`
  flex: none;
  width: ${(p) => p.$s}px;
  height: ${(p) => p.$s}px;
  border: 1px solid #000;
  background: #fff;
`;

const Stroke = styled.span<{ $w: number; $h?: number; $color?: string }>`
  flex: none;
  width: ${(p) => p.$w}px;
  height: ${(p) => p.$h ?? 1}px;
  background: ${(p) => p.$color ?? "#000"};
`;

const Group = ({ names, w }: { names: string[]; w?: number }) => (
  <ToolGroup>
    {names.map((n) => (
      <Tool key={n} $w={w} aria-label={n}><Icon name={n} /></Tool>
    ))}
  </ToolGroup>
);

const Split = ({ name }: { name: string }) => (
  <ToolGroup>
    <Tool $w={20} aria-label={name}><Icon name={name} /></Tool>
    <Tool $w={10} aria-label={`${name} options`}><Caret $w={2} /></Tool>
  </ToolGroup>
);

const ComboBox = ({ value, name, children }: { value: string; name: string; children?: React.ReactNode }) => (
  <Combo>
    {children}
    <select aria-label={name} defaultValue={value}><option>{value}</option></select>
    <Caret />
  </Combo>
);

const Title = ({ text, launcher, plain }: { text: string; launcher?: boolean; plain?: boolean }) => (
  <PanelTitle $launcher={launcher}>
    {text}
    {!plain && <Caret />}
    {launcher && (
      <svg width="7" height="7" viewBox="0 0 7 7"><path d="M1 1l4 4M6 2v4H2" stroke="#444" fill="none" strokeWidth="1.300" /></svg>
    )}
  </PanelTitle>
);

const RibbonBar = () => (
  <Ribbon>
    <Panel $w={111}>
      <PanelBody>
        <BigButton $w={50}><Icon name="line" size={32} />Line</BigButton>
        <Col>{["arc", "circle", "ellipse"].map((n) => <Split key={n} name={n} />)}</Col>
        <Col>{["pline", "rect", "hatch"].map((n) => <Group key={n} names={[n]} />)}</Col>
      </PanelBody>
      <Title text="Draw" />
    </Panel>
    <Panel $w={158}>
      <PanelBody>
        <BigButton $w={49}><Icon name="move" size={32} />Move</BigButton>
        <Col>
          <Group names={["copy", "rotate", "stretch"]} w={23} />
          <Group names={["scale", "offset", "mirror"]} w={23} />
          <Group names={["erase", "explode", "array"]} w={23} />
        </Col>
        <Col>{["order", "trim", "fillet"].map((n) => <Split key={n} name={n} />)}</Col>
      </PanelBody>
      <Title text="Modify" />
    </Panel>
    <Panel $w={170}>
      <PanelBody>
        <BigButton $w={71}>
          <Icon name="bigA" size={32} />Multiline<br />Text
          <SideCaret><Caret $w={2} /></SideCaret>
        </BigButton>
        <Col>
          <Label><Icon name="linear" />Linear<Caret $w={2} /></Label>
          <Label><Icon name="leader" />Multileader<Caret $w={2} /></Label>
          <Label><Icon name="table" />Table</Label>
        </Col>
      </PanelBody>
      <Title text="Annotation" />
    </Panel>
    <Panel $w={206}>
      <PanelBody $pad={2}>
        <Col $grow>
          <Row $gap={4}>
            <Group names={["layerProps"]} />
            <Group names={["layerCurrent"]} />
            <Group names={["layerMatch", "layerPrev"]} w={23} />
            <Group names={["layerIso", "layerUniso"]} w={23} />
            <Group names={["layerFreeze", "layerOff"]} w={23} />
          </Row>
          <ComboBox name="Layer state" value="Unsaved Layer State" />
          <ComboBox name="Layer" value="0">
            <Icon name="bulb" size={17} /><Icon name="sun" size={17} /><Icon name="vpSun" size={17} /><Icon name="unlock" size={17} />
            <Swatch $s={14} />
          </ComboBox>
        </Col>
      </PanelBody>
      <Title text="Layers" />
    </Panel>
    <Panel $w={164}>
      <PanelBody $pad={1}>
        <BigButton $w={49}><Icon name="insert" size={32} />Insert</BigButton>
        <Col>
          <Label><Icon name="create" />Create</Label>
          <Label><Icon name="blockEdit" />Edit</Label>
          <Label><Icon name="editAttr" />Edit Attributes<Caret $w={2} /></Label>
        </Col>
      </PanelBody>
      <Title text="Block" />
    </Panel>
    <Panel $w={205}>
      <PanelBody $pad={3}>
        <Col $grow>
          <Row $gap={1}><Icon name="wheel" /><ComboBox name="Color" value="ByLayer"><Swatch $s={16} /></ComboBox></Row>
          <Row $gap={1}><Icon name="weights" /><ComboBox name="Lineweight" value="ByLayer"><Stroke $w={64} $h={2} /></ComboBox></Row>
          <Row $gap={1}><Icon name="types" /><ComboBox name="Linetype" value="ByLayer"><Stroke $w={64} $h={2} $color="#777" /></ComboBox></Row>
        </Col>
      </PanelBody>
      <Title text="Properties" launcher />
    </Panel>
    <Panel $w={95}>
      <PanelBody>
        <BigButton $w={70}><Icon name="measure" size={32} />Measure<Caret $w={2} /></BigButton>
        <Col>{["quickSel", "selObj", "calc"].map((n) => <Group key={n} names={[n]} />)}</Col>
      </PanelBody>
      <Title text="Utilities" />
    </Panel>
    <Panel $w={78}>
      <PanelBody>
        <BigButton $w={53}><Icon name="paste" size={32} />Paste<Caret $w={2} /></BigButton>
        <Col>{["cut", "copyClip", "matchProp"].map((n) => <Group key={n} names={[n]} />)}</Col>
      </PanelBody>
      <Title text="Clipboard" plain />
    </Panel>
  </Ribbon>
);

/* ---------- properties palette ---------- */

const Workspace = styled.main`
  display: flex;
  flex: 1;
  min-height: 0;
  padding-top: 5px;
`;

const Dock = styled.aside`
  display: flex;
  flex: none;
  width: 339px;
  padding: 2px 0;
`;

const Palette = styled.section`
  display: flex;
  flex-direction: column;
  width: 313px;
  border-radius: 4px;
  background: #f0f0f0;
  overflow: hidden;
`;

const PaletteHead = styled.header`
  display: flex;
  align-items: center;
  gap: 5px;
  height: 20px;
  padding-left: 2px;
  background: #a0a0a0;
`;

const Grip = styled.span<{ $w: number; $h: number; $color?: string }>`
  flex: none;
  width: ${(p) => p.$w}px;
  height: ${(p) => p.$h}px;
  background-image: conic-gradient(from 270deg at 1px 1px, ${(p) => p.$color ?? "#333"} 90deg, transparent 90deg);
  background-size: 2px 2px;
`;

const BarGrip = styled(Grip)`
  background-size: 3px 3px;
`;

const Picker = styled.div`
  display: flex;
  gap: 4px;
  padding: 11px 0 7px 20px;
`;

const Selection = styled.label`
  position: relative;
  display: flex;
  align-items: center;
  width: 205px;
  height: 24px;
  border: 1px solid #777;
  border-radius: 3px;
  background: linear-gradient(#f4f4f4 50%, #dedede 50%, #d2d2d2);
  select { width: 100%; height: 22px; padding-left: 3px; appearance: none; outline: 0; }
  > span { position: absolute; right: 3px; }
`;

const PickTools = styled.div`
  display: flex;
  border: 1px solid #8c8c8c;
  button + button { border-left: 1px solid #8c8c8c; }
`;

const Category = styled.section`
  width: 284px;
  margin: 0 0 3px 18px;
`;

const CategoryHead = styled.button`
  display: flex;
  align-items: center;
  justify-content: space-between;
  width: 100%;
  height: 20px;
  padding: 0 8px 2px 5px;
  border: 1px solid #868686;
  background: linear-gradient(#b2b2b2, #9a9a9a);
  font-weight: 700;
`;

const Sheet = styled.table`
  width: 268px;
  margin-left: 16px;
  border-collapse: separate;
  border-spacing: 0;
  table-layout: fixed;
  border-left: 1px solid #8c8c8c;
  border-right: 1px solid #8c8c8c;
  th, td {
    height: 19px;
    padding: 0 0 0 4px;
    border-bottom: 1px solid #8c8c8c;
    font-weight: 400;
    text-align: left;
    white-space: nowrap;
    line-height: 18px;
  }
  th { width: 123px; border-right: 1px solid #8c8c8c; }
`;

const Value = styled.td<{ $ro?: boolean }>`
  && { padding-left: 2px; }
  background: ${(p) => (p.$ro ? "#f0f0f0" : "#fff")};
`;

const Sample = styled.span`
  display: flex;
  align-items: center;
  gap: 5px;
  padding-left: 2px;
`;

const PaletteTabs = styled.nav`
  display: flex;
  flex-direction: column;
  padding-top: 22px;
`;

const PaletteTab = styled.button<{ $on?: boolean }>`
  width: 20px;
  height: 121px;
  border: 1px solid #4a4a4a;
  border-left: 0;
  border-bottom: 0;
  border-radius: 0 4px 0 0;
  background: ${(p) => (p.$on ? "#f0f0f0" : "linear-gradient(90deg, #d2d2d2, #c4c4c4)")};
  span { display: block; margin: auto; writing-mode: vertical-rl; transform: rotate(180deg); line-height: 18px; }
`;

type Entry = [label: string, value: string, readOnly?: boolean];

const sheets: { title: string; rows: Entry[] }[] = [
  { title: "General", rows: [["Color", "ByLayer"], ["Layer", "0"], ["Linetype", "ByLayer"], ["Linetype scale", "1.0000"], ["Lineweight", "ByLayer"], ["Thickness", "0.0000"]] },
  { title: "3D Visualization", rows: [["Material", "ByLayer"], ["Shadow display", "Casts and Receives Shad..."]] },
  { title: "Layout", rows: [["Layout name", "Layout1"], ["Page setup name", "<None>", true], ["DPI to raster", "300"]] },
  { title: "Plot style", rows: [["Plot style", "ByColor", true], ["Plot style table", "None"], ["Plot table attached to", "Layout1", true], ["Plot table type", "Not available", true]] },
  { title: "View", rows: [["Center X", "68.4139", true], ["Center Y", "53.0625", true], ["Center Z", "0.0000", true], ["Height", "8.1505", true], ["Width", "10.7054", true]] },
  { title: "Misc", rows: [["Annotation scale", "1:1"], ["UCS icon On", "Yes"], ["UCS icon at origin", "Yes"], ["UCS per viewport", "Yes"], ["UCS Name", "", true], ["Visual Style", "2D Wireframe"]] },
];

const PropertyValue = ({ label, value }: { label: string; value: string }) => {
  if (label === "Color") return <Sample><Swatch $s={10} />{value}</Sample>;
  if (label === "Linetype" || label === "Lineweight") return <Sample><Stroke $w={61} />{value}</Sample>;
  return <>{value}</>;
};

const PropertiesDock = () => (
  <Dock>
    <Palette>
      <PaletteHead><Grip $w={4} $h={12} />Properties</PaletteHead>
      <Picker>
        <Selection>
          <select aria-label="Selection" defaultValue="No selection"><option>No selection</option></select>
          <Caret $color="#000" />
        </Selection>
        <PickTools>
          {["pickAdd", "selObj", "quickSel"].map((n) => <Tool key={n} $w={25} aria-label={n}><Icon name={n} /></Tool>)}
        </PickTools>
      </Picker>
      {sheets.map((s) => (
        <Category key={s.title}>
          <CategoryHead>{s.title}<Caret $up $color="#000" /></CategoryHead>
          <Sheet>
            <tbody>
              {s.rows.map(([label, value, ro]) => (
                <tr key={label}>
                  <th scope="row">{label}</th>
                  <Value $ro={ro}><PropertyValue label={label} value={value} /></Value>
                </tr>
              ))}
            </tbody>
          </Sheet>
        </Category>
      ))}
    </Palette>
    <PaletteTabs>
      {["Design", "Display", "Extended Data", "Object Class"].map((t, i) => (
        <PaletteTab key={t} $on={i === 0}><span>{t}</span></PaletteTab>
      ))}
    </PaletteTabs>
  </Dock>
);

/* ---------- drawing area ---------- */

const Stage = styled.section`
  display: flex;
  flex-direction: column;
  flex: 1;
  min-width: 0;
`;

const Canvas = styled.div`
  position: relative;
  display: flex;
  flex: 1;
  justify-content: center;
  align-items: center;
  min-height: 0;
  padding: 10px 0 0 7px;
  background: #a8a8a8;
  border: 1px solid #8a8a8a;
  border-right-color: #fff;
  > svg { max-width: 100%; }
`;

const MdiControls = styled.div`
  position: absolute;
  top: 6px;
  right: 7px;
  display: flex;
  gap: 2px;
  button { display: flex; }
`;

const SnipHint = styled.div`
  position: absolute;
  top: 140px;
  right: 127px;
  width: 172px;
  padding-left: 32px;
  line-height: 22px;
  background: #f0f0f0;
  color: #000;
  opacity: 0.09;
`;

const Drawing = () => (
  <svg width="1130" height="875" viewBox="0 0 1130 875" shapeRendering="crispEdges">
    <rect x="14" y="14" width="1116" height="861" fill="#fff" />
    <rect x="0.500" y="0.500" width="1121" height="866" fill="#000" stroke="#fff" />
    <path d="M26.500 26.500H1095.500V840.500H26.500z" fill="none" stroke="#fff" strokeDasharray="16 9" strokeDashoffset="8" />
    <rect x="133.500" y="107.500" width="855" height="652" fill="none" stroke="#fff" strokeWidth="3" />
    <g stroke="#0000f0" fill="none">
      <path d="M147.500 731.500h12v12h-12zM153.500 731V660M160 737.500h60" />
      <path d="M147.500 675.500h12l-6-16zM216.500 731.500v12l16-6z" />
    </g>
    <g fill="#0000f0" fontFamily="Open Sans" fontWeight="300" fontSize="24">
      <text x="149" y="649">Y</text>
      <text x="244" y="746">X</text>
    </g>
  </svg>
);

const LayoutBar = styled.nav`
  display: flex;
  flex: none;
  height: 18px;
  background: #f0f0f0;
  border-top: 1px solid #666;
  border-bottom: 2px solid #fff;
  font-family: ${sys};
`;

const NavButton = styled.button`
  display: flex;
  align-items: center;
  justify-content: center;
  width: 15px;
  border: 1px solid #b4b4b4;
  border-left: 0;
`;

const LayoutTab = styled.button<{ $on?: boolean }>`
  padding: 0 9px;
  margin-left: -2px;
  line-height: 15px;
  color: ${(p) => (p.$on ? "#fff" : "#000")};
  background: ${(p) => (p.$on ? "#000" : "#f0f0f0")};
  clip-path: polygon(0 0, 100% 0, calc(100% - 5px) 100%, 5px 100%);
`;

const Slant = styled.span<{ $back?: boolean }>`
  width: 6px;
  background: linear-gradient(to ${(p) => (p.$back ? "top" : "bottom")} right, transparent 45%, #555 46%, #555 56%, transparent 57%);
`;

const Command = styled.section`
  position: relative;
  display: flex;
  flex: none;
  height: 59px;
  margin-top: 4px;
  background: #fff;
  font-family: "Liberation Mono", "Courier New", monospace;
  font-size: 13px;
`;

const CommandGrip = styled.div`
  width: 15px;
  padding: 3px 1px;
  border-radius: 4px 0 0 0;
  background: #a0a0a0;
`;

const CommandBody = styled.div`
  display: flex;
  flex-direction: column;
  flex: 1;
  min-width: 0;
`;

const History = styled.div`
  display: flex;
  justify-content: space-between;
  height: 41px;
  border-bottom: 1px solid #999;
  pre { margin: 0; padding: 1px 0 0 2px; font: inherit; line-height: 16px; }
`;

const Prompt = styled.label`
  display: flex;
  flex: 1;
  align-items: center;
  padding: 2px 0 0 2px;
  white-space: pre;
  input { flex: 1; min-width: 0; height: 16px; outline: 0; }
`;

const VScroll = styled.div`
  display: flex;
  flex-direction: column;
  justify-content: space-between;
  align-items: center;
  width: 16px;
  padding: 7px 0;
  background: #f4f4f4;
`;

const HScroll = styled.div`
  display: flex;
  align-items: center;
  justify-content: space-between;
  width: 86px;
  height: 16px;
  padding: 0 22px 0 6px;
  background: #f0f0f0;
  i { width: 15px; height: 15px; border: 1px solid #aaa; background: linear-gradient(#f8f8f8 50%, #d8d8d8 50%); }
  span:first-child { transform: rotate(90deg); }
  span:last-child { transform: rotate(-90deg); }
`;

const Markup = styled.svg`
  position: absolute;
  left: 180px;
  top: 12px;
  z-index: 3;
  pointer-events: none;
`;

const StageView = () => (
  <Stage>
    <Canvas>
      <Drawing />
      <MdiControls>
        {["min", "restore", "close"].map((n) => <button key={n} aria-label={n}><Icon name={n} /></button>)}
      </MdiControls>
      <SnipHint>Full-screen Snip</SnipHint>
    </Canvas>
    <LayoutBar>
      {["first", "prev", "next", "last"].map((n) => <NavButton key={n} aria-label={n}><Icon name={n} size={14} /></NavButton>)}
      <Slant $back />
      <LayoutTab>Model</LayoutTab>
      <LayoutTab $on>Layout1</LayoutTab>
      <LayoutTab>Layout2</LayoutTab>
      <Slant />
    </LayoutBar>
    <Command>
      <CommandGrip><Grip as="div" $w={12} $h={4} /></CommandGrip>
      <CommandBody>
        <History>
          <pre>{"[All/Center/Dynamic/Extents/Previous/Scale/Window/Object] <real time>: c\nSpecify center point: 49,48"}</pre>
          <VScroll><Caret $up $w={3} /><Caret $w={3} /></VScroll>
        </History>
        <Prompt>
          {"Enter magnification or height <8.1505>: "}
          <input aria-label="Command line" />
          <HScroll><Caret $w={3} /><i /><Caret $w={3} /></HScroll>
        </Prompt>
      </CommandBody>
      <Markup width="166" height="60" viewBox="0 0 166 60" fill="none" stroke="#f01010" strokeWidth="2" strokeLinejoin="round" strokeLinecap="round">
        <path d="M8 7C3 12 3 20 6 30C30 31 50 28 68 28C78 26 78 22 73 9C60 9 50 3 33 2C22 2 15 3 9 5" />
        <path d="M70 24C85 24 95 25 106 23C116 21 128 22 141 20C153 20 161 26 161 34C162 48 160 53 151 54C145 56 138 57 131 56C110 56 90 53 76 51C72 48 73 40 71 27" />
      </Markup>
    </Command>
  </Stage>
);

/* ---------- status bar & taskbar ---------- */

const StatusBar = styled.footer`
  display: flex;
  flex: none;
  height: 23px;
  background: linear-gradient(#989898, #767676);
  border-top: 1px solid #000;
  border-bottom: 1px solid #444;
  font-family: ${sys};
`;

const Coords = styled.output`
  width: 175px;
  padding-left: 12px;
  line-height: 23px;
`;

const StatusButton = styled.button<{ $w?: number; $on?: boolean }>`
  display: flex;
  align-items: center;
  justify-content: center;
  gap: 2px;
  width: ${(p) => p.$w ?? 22}px;
  border-left: 1px solid #5c5c5c;
  white-space: nowrap;
  background: ${(p) => (p.$on ? "linear-gradient(#e8f6fb, #9fd2e6)" : "linear-gradient(#bdbdbd, #a2a2a2)")};
`;

const Spacer = styled.span<{ $w?: number }>`
  ${(p) => (p.$w ? css`width: ${p.$w}px;` : css`flex: 1;`)}
  border-left: 1px solid #5c5c5c;
`;

const Tray = styled.div`
  display: flex;
  align-items: center;
  gap: 3px;
  width: 71px;
  padding-left: 5px;
  margin-left: 2px;
  border: 1px solid #444;
  background: #8e8e8e;
`;

const TaskBar = styled.footer`
  position: relative;
  display: flex;
  align-items: center;
  flex: none;
  height: 29px;
  border-top: 1px solid #b4b4b4;
  background: linear-gradient(100deg, #767676 0%, #8a8a8a 15%, #9a9a9a 30%, #a0a0a0 42%, #8c8c8c 55%, #989898 70%, #8a8a8a 82%, #6c6c6c 100%);
`;

const Orb = styled.button`
  position: absolute;
  left: 9px;
  bottom: -2px;
  z-index: 2;
`;

const Launchers = styled.div`
  display: flex;
  align-items: center;
  gap: 28px;
  padding: 0 16px 0 58px;
  button { display: flex; }
  ${BarGrip} { margin-right: -6px; }
`;

const TaskButton = styled.button<{ $on?: boolean }>`
  display: flex;
  align-items: center;
  justify-content: center;
  width: 43px;
  height: 28px;
  margin-right: 3px;
  border: 1px solid #dcdcdc;
  outline: 1px solid #5a5a5a;
  border-radius: 3px;
  background: ${(p) => (p.$on ? "linear-gradient(160deg, #d8d8d8, #f2f2f2)" : "linear-gradient(160deg, #c2c2c2, #a6a6a6)")};
`;

const Notify = styled.div`
  display: flex;
  align-items: center;
  gap: 6px;
  margin-left: auto;
  color: #fff;
  time { width: 66px; padding-left: 4px; text-align: center; }
`;

const Lang = styled.span`
  width: 22px;
  margin: 0 8px 4px 11px;
`;

const ShowDesktop = styled.button`
  width: 14px;
  height: 28px;
  margin-left: -2px;
  border: 1px solid #c8c8c8;
  background: linear-gradient(135deg, #909090, #606060);
`;

export default function App() {
  return (
    <Shell>
      <Global />
      <TitleBar>
        <LogoButton aria-label="Application menu">
          <svg width="26" height="30" viewBox="0 0 26 30">
            <path d="M9 13l6-3 3 10 5 2-4 4-12 3z" fill="#8c0c14" />
            <path d="M1 7C3 1 9-1 14 2l-3 8C8 6 5 6 1 7z" fill="#ee8a8a" />
            <path d="M23 2C15-1 9 5 12 13c2 7 6 11 13 9l-1-4c-5 0-7-3-8-7-1-3 0-6 4-5z" fill="#e0242c" />
            <path d="M23 2C17 0 11 3 12 9l4 0c0-3 1-4 4-3z" fill="#f06a6a" />
            <path d="M11 17l4 5-1 5-7 1z" fill="#c01a20" />
          </svg>
          <Caret $w={3} />
          <LogoTag>3D</LogoTag>
        </LogoButton>
        <QuickBar>
          {["new", "open", "save", "print", "undo"].map((n) => <button key={n} aria-label={n}><Icon name={n} /></button>)}
          <Caret $w={2} />
          <button aria-label="redo"><Icon name="redo" /></button>
          <Caret $w={2} $color="#555" />
          <Caret $color="#000" />
        </QuickBar>
        <WindowTitle><span>AutoCAD Civil 3D 2010</span><span>Map - North Arrows</span></WindowTitle>
        <InfoCenter onSubmit={(e) => e.preventDefault()}>
          <Row>
            <InfoArrow type="button" aria-label="Collapse"><Caret $color="#000" /></InfoArrow>
            <Keyword aria-label="Search" placeholder="Type a keyword or phrase" />
          </Row>
          <Row $gap={5}><button aria-label="Find"><Icon name="binoculars" /></button><Caret $w={2} /></Row>
          {["key", "dish", "star", "help"].map((n) => <button type="button" key={n} aria-label={n}><Icon name={n} /></button>)}
          <Caret $w={2} />
        </InfoCenter>
        <WinControls>
          <WinButton aria-label="Minimize"><Icon name="min" size={16} /></WinButton>
          <WinButton aria-label="Restore"><Icon name="restore" size={16} /></WinButton>
          <WinButton $wide aria-label="Close"><Icon name="close" size={16} /></WinButton>
        </WinControls>
      </TitleBar>
      <MenuBar>
        {["Home", "Insert", "Annotate", "Parametric", "View", "Manage", "Output", "Express Tools"].map((t, i) => (
          <MenuTab key={t} $on={i === 0}>{t}</MenuTab>
        ))}
        <MenuTab aria-label="Minimize ribbon"><RibbonToggle><Caret $w={3} /></RibbonToggle></MenuTab>
      </MenuBar>
      <RibbonBar />
      <Workspace>
        <PropertiesDock />
        <StageView />
      </Workspace>
      <StatusBar>
        <Coords>68.1952, 55.4465, 0.0000</Coords>
        {["snap", "grid", "ortho", "polar", "osnap", "otrack", "ducs", "dyn", "lwt", "qp"].map((n) => (
          <StatusButton key={n} aria-label={n} $on={n === "osnap" || n === "ducs"}><Icon name={n} /></StatusButton>
        ))}
        <Spacer />
        <StatusButton $w={45}>MODEL</StatusButton>
        <StatusButton aria-label="Model sheet"><Icon name="modelSheet" /></StatusButton>
        <StatusButton aria-label="Quick view"><Icon name="sheets" /></StatusButton>
        <Spacer $w={12} />
        {["pan", "zoom", "steering", "motion"].map((n) => <StatusButton key={n} aria-label={n}><Icon name={n} /></StatusButton>)}
        <Spacer $w={24} />
        <StatusButton $w={14} aria-label="Previous"><Icon name="trayPrev" size={14} /></StatusButton>
        <StatusButton aria-label="Maximize viewport"><Icon name="maxVp" /></StatusButton>
        <StatusButton $w={14} aria-label="Next"><Icon name="trayNext" size={14} /></StatusButton>
        <StatusButton aria-label="Viewport lock"><Icon name="vpLock" /></StatusButton>
        <StatusButton $w={82}><Icon name="vpScale" />0.785226<Caret $color="#000" /></StatusButton>
        {["annoSync", "annoVis", "annoAuto"].map((n) => <StatusButton key={n} aria-label={n}><Icon name={n} /></StatusButton>)}
        <Spacer $w={5} />
        <StatusButton $w={153}><Icon name="gear" />2D Drafting &amp; Annotation<Caret $color="#000" /></StatusButton>
        <StatusButton aria-label="Toolbar lock"><Icon name="padlock" /></StatusButton>
        <Tray><Icon name="hwLock" /><Icon name="bulb" /><Icon name="trayCheck" /></Tray>
        <StatusButton $w={14} aria-label="Tray menu"><Caret $w={3} $color="#000" /></StatusButton>
        <StatusButton $w={20} aria-label="Clean screen"><Icon name="clean" size={16} /></StatusButton>
      </StatusBar>
      <TaskBar>
        <Orb aria-label="Start">
          <svg width="36" height="36" viewBox="0 0 36 36">
            <defs>
              <radialGradient id="orb" cx=".5" cy=".9" r=".9">
                <stop offset="0" stopColor="#3ce0f8" />
                <stop offset=".4" stopColor="#1a74a8" />
                <stop offset=".8" stopColor="#1c4468" />
                <stop offset="1" stopColor="#9ab4c8" />
              </radialGradient>
            </defs>
            <circle cx="18" cy="18" r="17.500" fill="url(#orb)" stroke="#2a3c4c" />
            <path d="M9 10c3-2 6-2 9 0l-2 7c-3-2-6-2-9 0z" fill="#e8592a" />
            <path d="M19 10.500c3 2 7 2 10 0l-2 7c-3 2-7 2-10 0z" fill="#8cc63e" />
            <path d="M7 18c3-2 6-2 9 0l-2 7c-3-2-6-2-9 0z" fill="#4aa4e0" />
            <path d="M17 18.500c3 2 7 2 10 0l-2 7c-3 2-7 2-10 0z" fill="#f8c832" />
            <path d="M4 13C8 1 28 1 32 13 24 8 12 8 4 13z" fill="#fff" fillOpacity=".3" />
          </svg>
        </Orb>
        <Launchers>
          <BarGrip $w={8} $h={21} />
          {["firefox", "floppy", "folder", "wmp"].map((n) => <button key={n} aria-label={n}><Icon name={n} /></button>)}
        </Launchers>
        {["chrome", "people", "chat", "c10"].map((n) => (
          <TaskButton key={n} $on={n === "c10"} aria-label={n}><Icon name={n} /></TaskButton>
        ))}
        <Notify>
          <BarGrip $w={8} $h={21} />
          <Lang>HR</Lang>
          <Caret $up $color="#fff" />
          <span />
          {["flag", "plug", "signal", "mute", "dropbox"].map((n) => <Icon key={n} name={n} />)}
          <time>19:11</time>
          <ShowDesktop aria-label="Show desktop" />
        </Notify>
      </TaskBar>
    </Shell>
  );
}
